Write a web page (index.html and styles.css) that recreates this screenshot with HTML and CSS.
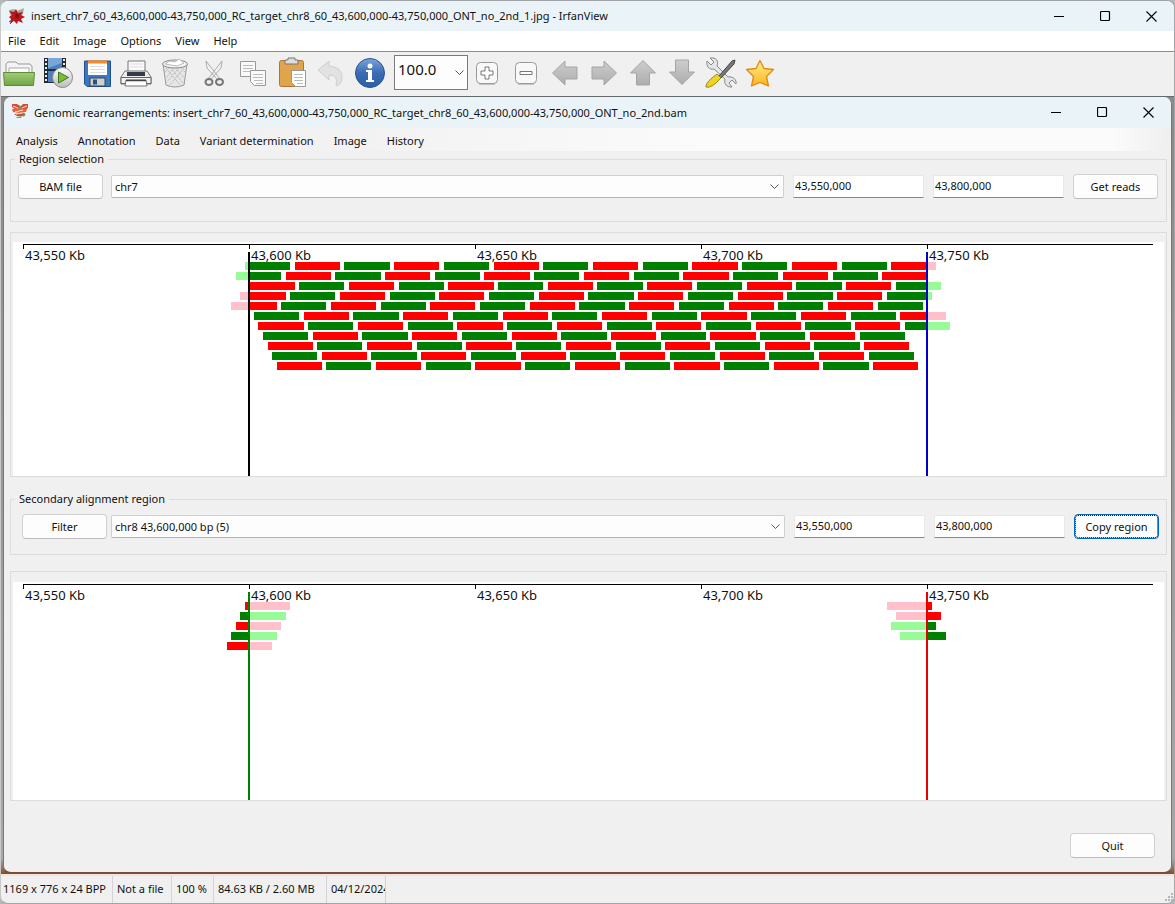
FILE: index.html
```html
<!DOCTYPE html>
<html lang="en">
<head>
<meta charset="utf-8">
<title>IrfanView</title>
<link rel="stylesheet" href="styles.css">
</head>
<body>
<div class="app">
  <header class="titlebar">
    <svg class="logo" width="18" height="18" viewBox="0 0 18 18"><path d="M1 3l5-1 3 2 7-3-1 6-3 3-4 2-5-2z" fill="#a9a9a0"/><path d="M1 4l5 1 2-3 2 4 5-1-2 3 4 2-4 2 2 4-5-2-1 3-3-3-4 2 1-4-2-2 3-2z" fill="#b8181c"/><path d="M8 6l3 2-1 4-3-2z" fill="#8c0b10"/><path d="M1 15l4-3M2 17l4-4" stroke="#44516b"/></svg>
    <h1>insert_chr7_60_43,600,000-43,750,000_RC_target_chr8_60_43,600,000-43,750,000_ONT_no_2nd_1.jpg - IrfanView</h1>
    <div class="winbtns">
      <button aria-label="Minimize"><svg width="11" height="11"><path d="M0 5.500h10" stroke="#000"/></svg></button>
      <button aria-label="Maximize"><svg width="11" height="11"><rect x=".5" y=".5" width="9" height="9" rx="1" fill="none" stroke="#000" stroke-width="1.200"/></svg></button>
      <button aria-label="Close"><svg width="11" height="11"><path d="M.5.5l10 10M10.500.5l-10 10" stroke="#000" stroke-width="1.100"/></svg></button>
    </div>
  </header>
  <nav class="menubar">
    <button>File</button><button>Edit</button><button>Image</button><button>Options</button><button>View</button><button>Help</button>
  </nav>
  <div class="toolbar">
    <button class="tool" aria-label="Open"><svg width="34" height="34" viewBox="0 0 34 34"><path d="M4 17V8l2-2h8l2 2h12l2 2v8z" fill="#f4f4f4" stroke="#999"/><path d="M7 17v-5h20v5" fill="#fff" stroke="#aaa"/><path d="M1.500 16.500h31l-1 13h-29z" fill="url(#green)" stroke="#5c8d35"/></svg></button>
    <button class="tool" aria-label="Slideshow"><svg width="34" height="34" viewBox="0 0 34 34"><path d="M3 2h22v25H3z" fill="#222b35"/><path d="M7 2h14v11H7zM7 15h14v11H7z" fill="#4a80bd"/><path d="M7 2h14v5L7 12z" fill="#79a8d8"/><path d="M5 3v23M23 3v23" stroke="#eee" stroke-width="2" stroke-dasharray="2 2"/><circle cx="21.500" cy="21.500" r="10" fill="url(#silver)" stroke="#888"/><path d="M17.500 16v11l10-5.500z" fill="#7dbb3d" stroke="#3d7718"/></svg></button>
    <button class="tool" aria-label="Save"><svg width="34" height="34" viewBox="0 0 34 34"><path d="M4.500 5h26v25.500H7l-2.500-2.500z" fill="#3b78c3" stroke="#234f88"/><path d="M8 5h19v14H8z" fill="#fff"/><path d="M8 4.500h19v3H8z" fill="#ff861c"/><path d="M10 10.500h15M10 13.500h15M10 16.500h15" stroke="#ddd"/><path d="M10 22h15v8H10z" fill="#cdd1d4" stroke="#345"/><path d="M13 23.500h4v5h-4z" fill="#33506f"/></svg></button>
    <button class="tool" aria-label="Print"><svg width="34" height="34" viewBox="0 0 34 34"><path d="M9 16V5h17v11" fill="#fafafa" stroke="#777"/><path d="M11 8h13M11 11h13" stroke="#ddd"/><path d="M6 15h22l4 6v7H2v-7z" fill="#eee" stroke="#777"/><path d="M8 16h18v4H8z" fill="#333c48"/><path d="M2 21.500h30v6H2z" fill="#f2f2f2" stroke="#666"/><path d="M7 24h20l1 6H6z" fill="#fff" stroke="#777"/><path d="M7 24.500h20" stroke="#444" stroke-width="1.500"/></svg></button>
    <button class="tool" aria-label="Delete"><svg width="34" height="34" viewBox="0 0 34 34"><path d="M5 8l3 21q9 4 18 0l3-21z" fill="#e6e6e6" stroke="#999"/><path d="M8 12l15 18M12 11l13 16M17 11l9 11M22 11l5 5M26 12L11 30M22 11L9 26M17 11L8 22M12 11l-5 5" stroke="#aaa" stroke-dasharray="1 1"/><ellipse cx="17" cy="8" rx="12.500" ry="4" fill="#f3f3f3" stroke="#888"/><path d="M7 8l5-3 5 1 4-3 5 4-7 3z" fill="#fff" stroke="#bbb"/></svg></button>
    <button class="tool" aria-label="Cut"><svg width="34" height="34" viewBox="0 0 34 34"><path d="M9 5l1 7 11 12 2-1zM25 5l-1 7-11 12-2-1z" fill="#f5f5f5" stroke="#aaa"/><g fill="none" stroke="#777" stroke-width="2"><ellipse cx="12" cy="26" rx="3.500" ry="3"/><ellipse cx="22.500" cy="26" rx="3.500" ry="3"/></g></svg></button>
    <button class="tool" aria-label="Copy"><svg width="34" height="34" viewBox="0 0 34 34"><g fill="#fafafa" stroke="#999"><path d="M4.500 5.500h15v15h-15z"/><path d="M14.500 14.500h15v15h-11l-4-4z"/></g><path d="M7 9.500h10M7 12.500h10M7 15.500h7M17 18.500h10M17 21.500h10M18 24.500h9M20 27.500h7" stroke="#bbb"/></svg></button>
    <button class="tool" aria-label="Paste"><svg width="34" height="34" viewBox="0 0 34 34"><rect x="4.500" y="4.500" width="24" height="26" rx="2" fill="#dfa44c" stroke="#a97835"/><path d="M10 8h13V4h-3V2h-7v2h-3z" fill="#ddd" stroke="#777"/><path d="M16.500 14.500h14v16h-10l-4-4z" fill="#fff" stroke="#999"/><path d="M19 18.500h9M19 21.500h9M19 24.500h9M22 27.500h6" stroke="#bbb"/></svg></button>
    <button class="tool" aria-label="Undo"><svg width="34" height="34" viewBox="0 0 34 34"><path d="M4 14L15 5v5q14 1 13 13-1 6-6 7 3-11-7-11v5z" fill="#e2e2e2" stroke="#cfcfcf"/></svg></button>
    <button class="tool" aria-label="Information"><svg width="34" height="34" viewBox="0 0 34 34"><circle cx="17" cy="17" r="14.500" fill="url(#blue)" stroke="#2a538f"/><circle cx="17" cy="10" r="2.500" fill="#fff"/><path d="M13 14h6v10h2v2h-8v-2h2v-8h-2z" fill="#fff"/></svg></button>
    <div class="combo zoom"><select aria-label="Zoom"><option>100.0</option></select><svg class="chev" width="9" height="6"><path d="M.5.5l4 4 4-4" fill="none" stroke="#555"/></svg></div>
    <button class="tool" aria-label="Zoom in"><svg width="34" height="34" viewBox="0 0 34 34"><rect x="6.500" y="6.500" width="21" height="21" rx="4" fill="#f8f8f8" stroke="#999"/><path d="M9 28h16" stroke="#999"/><path d="M15 11h4v4h4v4h-4v4h-4v-4h-4v-4h4z" fill="#fff" stroke="#777"/></svg></button>
    <button class="tool" aria-label="Zoom out"><svg width="34" height="34" viewBox="0 0 34 34"><rect x="6.500" y="6.500" width="21" height="21" rx="4" fill="#f8f8f8" stroke="#999"/><path d="M9 28h16" stroke="#999"/><path d="M11 15.500h12v3H11z" fill="#fff" stroke="#777"/></svg></button>
    <button class="tool" aria-label="Previous"><svg width="34" height="34" viewBox="0 0 34 34"><path d="M4.500 17L17 5v6h12v12H17v6z" fill="url(#gray)" stroke="#a4a4a4"/></svg></button>
    <button class="tool" aria-label="Next"><svg width="34" height="34" viewBox="0 0 34 34"><path d="M29.500 17L17 5v6H5v12h12v6z" fill="url(#gray)" stroke="#a4a4a4"/></svg></button>
    <button class="tool" aria-label="First"><svg width="34" height="34" viewBox="0 0 34 34"><path d="M17 4.500L29.500 17h-6v12h-13V17h-6z" fill="url(#gray)" stroke="#a4a4a4"/></svg></button>
    <button class="tool" aria-label="Last"><svg width="34" height="34" viewBox="0 0 34 34"><path d="M17 28.500L29.500 16h-6V4h-13v12h-6z" fill="url(#gray)" stroke="#a4a4a4"/></svg></button>
    <button class="tool" aria-label="Settings"><svg width="34" height="34" viewBox="0 0 34 34"><path d="M3 5l4 4 3-3-4-4c6-1 9 3 7 8l11 11c5-1 9 3 8 7l-4-4-3 3 3 4c-6 0-8-3-7-8L10 13c-5 1-8-3-7-8z" fill="#e6e6e6" stroke="#888"/><path d="M15 20L28 5l3-1-1 4-13 14z" fill="#777" stroke="#444"/><path d="M2 30q0-4 11-12l4 4Q7 33 2 31z" fill="#eed320" stroke="#a08a10"/></svg></button>
    <button class="tool" aria-label="Favourites"><svg width="34" height="34" viewBox="0 0 34 34"><path d="M17 4.500l4 8 9.500 1-7 7 2 9.500-8.500-3.500L8.500 30l2-9.500-7-7 9.500-1z" fill="url(#gold)" stroke="#e08a12" stroke-width="1.300" stroke-linejoin="round"/></svg></button>
    <svg class="defs" width="0" height="0"><defs>
      <linearGradient id="green" x2="0" y2="1"><stop stop-color="#a3cb78"/><stop offset="1" stop-color="#6fa645"/></linearGradient>
      <linearGradient id="silver" x2="0" y2="1"><stop stop-color="#fff"/><stop offset="1" stop-color="#bbb"/></linearGradient>
      <linearGradient id="blue" x2="0" y2="1"><stop stop-color="#7ba4da"/><stop offset=".5" stop-color="#3a6cb3"/><stop offset="1" stop-color="#2d5fa8"/></linearGradient>
      <linearGradient id="gray" x2="0" y2="1"><stop stop-color="#cdcdcd"/><stop offset="1" stop-color="#adadad"/></linearGradient>
      <linearGradient id="gold" x2="0" y2="1"><stop stop-color="#fff08c"/><stop offset="1" stop-color="#fdb21d"/></linearGradient>
    </defs></svg>
  </div>

  <div class="stage">
    <main class="window">
      <header class="titlebar inner">
        <svg class="logo" width="18" height="18" viewBox="0 0 18 18"><path d="M1 2h5l3 2 1 2-6 1-3-2zM10 4l2-2h5v4l-3 2-4-1z" fill="#dd4a33"/><path d="M1 7l7-1 8 1-1 3-7 1-6-1z" fill="#e8603f"/><path d="M3 12l11-1-2 3H6z" fill="#cf4b3c"/><path d="M5 15l6-1-1 2H6z" fill="#7fa860"/><path d="M2 4l5 2M11 6l5-2M4 10l8-2M5 12l6-1" stroke="#f4e6c4"/><path d="M8 4l2 2M12 14l2-2" stroke="#6b9a4a" stroke-width="2"/></svg>
        <h2>Genomic rearrangements: insert_chr7_60_43,600,000-43,750,000_RC_target_chr8_60_43,600,000-43,750,000_ONT_no_2nd.bam</h2>
        <div class="winbtns">
          <button aria-label="Minimize window"><svg width="11" height="11"><path d="M0 5.500h10" stroke="#000"/></svg></button>
          <button aria-label="Maximize window"><svg width="11" height="11"><rect x=".5" y=".5" width="9" height="9" rx="1" fill="none" stroke="#000" stroke-width="1.200"/></svg></button>
          <button aria-label="Close window"><svg width="11" height="11"><path d="M.5.5l10 10M10.500.5l-10 10" stroke="#000" stroke-width="1.100"/></svg></button>
        </div>
      </header>
      <nav class="menubar inner">
        <button>Analysis</button><button>Annotation</button><button>Data</button><button>Variant determination</button><button>Image</button><button>History</button>
      </nav>
      <div class="content">
        <fieldset class="group primary">
          <legend>Region selection</legend>
          <div class="fields">
            <button class="btn">BAM file</button>
            <div class="combo"><select aria-label="Chromosome"><option>chr7</option></select><svg class="chev" width="9" height="6"><path d="M.5.5l4 4 4-4" fill="none" stroke="#555"/></svg></div>
            <input class="coord" aria-label="Region start" value="43,550,000">
            <input class="coord" aria-label="Region end" value="43,800,000">
            <button class="btn">Get reads</button>
          </div>
        </fieldset>
        <section class="panel tall" aria-label="Primary alignments">
          <div class="canvas">
            <div class="axis"><span>43,550 Kb</span><span>43,600 Kb</span><span>43,650 Kb</span><span>43,700 Kb</span><span>43,750 Kb</span></div>
            <svg class="reads" id="primary" preserveAspectRatio="none"></svg>
          </div>
        </section>
        <fieldset class="group secondary">
          <legend>Secondary alignment region</legend>
          <div class="fields">
            <button class="btn">Filter</button>
            <div class="combo"><select aria-label="Secondary region"><option>chr8 43,600,000 bp (5)</option></select><svg class="chev" width="9" height="6"><path d="M.5.5l4 4 4-4" fill="none" stroke="#555"/></svg></div>
            <input class="coord" aria-label="Secondary start" value="43,550,000">
            <input class="coord" aria-label="Secondary end" value="43,800,000">
            <button class="btn focused">Copy region</button>
          </div>
        </fieldset>
        <section class="panel short" aria-label="Secondary alignments">
          <div class="canvas">
            <div class="axis"><span>43,550 Kb</span><span>43,600 Kb</span><span>43,650 Kb</span><span>43,700 Kb</span><span>43,750 Kb</span></div>
            <svg class="reads" id="secondary" preserveAspectRatio="none"></svg>
          </div>
        </section>
        <div class="actions"><button class="btn">Quit</button></div>
      </div>
    </main>
  </div>

  <footer class="status">
    <span class="size">1169 x 776 x 24 BPP</span><span class="index">Not a file</span><span class="scale">100 %</span><span class="memory">84.63 KB / 2.60 MB</span><span class="date">04/12/2024</span>
    <svg class="grip" width="9" height="9"><path d="M7 0h2v2H7zM4 3h2v2H4zM7 3h2v2H7zM1 6h2v2H1zM4 6h2v2H4zM7 6h2v2H7z" fill="#b5b5b5"/></svg>
  </footer>
</div>
<script src="reads.js"></script>
</body>
</html>
```
FILE: styles.css
```css
* { box-sizing: border-box; }
body { margin: 0; background: #b4b6b8; font: 11px/16px "Noto Sans", "Open Sans", sans-serif; color: #111; }
button, input, select { font: inherit; color: inherit; margin: 0; }
button { border: 0; background: none; padding: 0; }
h1, h2 { margin: 0; font: inherit; white-space: nowrap; }
svg { display: block; }

.app { min-height: 100vh; display: flex; flex-direction: column; background: #f0f0f0; border: 1px solid #a2a5a8; border-left-color: #c8c8c8; border-radius: 8px; overflow: hidden; }
.titlebar { height: 30px; flex: none; display: flex; align-items: center; padding-left: 7px; gap: 5px; background: #eaf4f8; }
.titlebar h1, .titlebar h2 { flex: 1; font-size: 11px; }
.winbtns { display: flex; }
.winbtns button { width: 46px; height: 28px; display: grid; place-items: center; }
.menubar { height: 20px; flex: none; display: flex; align-items: center; gap: 14px; padding-left: 7px; background: #fff; }
.toolbar { height: 45px; flex: none; display: flex; align-items: center; border-top: 1px solid #8c8c8c; padding-bottom: 3px; }
.tool { width: 39px; height: 40px; display: grid; place-items: center start; padding-left: 1px; }
.defs { position: absolute; }

.combo { position: relative; flex: 1; }
.combo select { width: 100%; height: 23px; appearance: none; border: 1px solid #d0d0d0; border-bottom-color: #b4b4b4; border-radius: 2px; background: #fdfdfd; padding: 0 3px; }
.chev { position: absolute; right: 5px; top: 9px; pointer-events: none; }
.combo.zoom { flex: none; width: 74px; margin: 0 1px 0 3px; }
.zoom select { height: 35px; border-color: #7a7a7a; border-radius: 0; font-size: 15px; line-height: 20px; padding: 0 3px 8px; }
.zoom .chev { right: 4px; top: 15px; }

.stage { flex: 1; display: flex; padding: 0 2px 0 2px; background: linear-gradient(#8a8a8a, #a8a8a8 98%, #8b4a28); border-top: 1px solid #66696c; }
.window { flex: 1; min-width: 0; display: flex; flex-direction: column; background: #f0f0f0; border: 1px solid #777; border-top: 0; border-bottom: 2px solid #75503e; border-radius: 8px; overflow: hidden; }
.titlebar.inner { height: 31px; }
.inner .logo { margin-bottom: 3px; }
.menubar.inner { height: 23px; padding: 2px 0 0 12px; gap: 20px; background: linear-gradient(90deg, #f0f0f0, #f2f2f2 30%, #fbfbfb 60%, #fbfbfb 95%, #efefef); }
.content { flex: 1; display: flex; flex-direction: column; padding: 0 4px 0 6px; }

.group { margin: 0; min-width: 0; border: 1px solid #dcdcdc; }
.group legend { padding: 0 4px; line-height: 16px; }
.primary { height: 71px; padding: 7px 8px 0 7px; }
.secondary { height: 64px; padding: 7px 7px 0 11px; }
.primary legend { margin-left: -3px; }
.secondary legend { margin-left: -7px; }
.fields { display: flex; align-items: center; gap: 9px; }
.primary .btn:first-child { margin-right: -1px; }
.secondary .btn:first-child { margin-right: -5px; }
.btn { width: 85px; height: 25px; flex: none; background: #fdfdfd; border: 1px solid #d0d0d0; border-bottom-color: #bcbcbc; border-radius: 4px; }
.btn.focused { border: 1px solid #0067c0; outline: 1px dotted #111; outline-offset: -2px; }
.coord { width: 131px; height: 23px; flex: none; border: 1px solid #e8e8e8; border-bottom-color: #868686; background: #fff; padding: 0 1px 2px; }

.panel { border: 1px solid #dcdcdc; display: flex; padding: 9px 2px 0; }
.tall { height: 245px; margin: 10px 0 14px; }
.short { height: 230px; margin-top: 16px; padding-top: 10px; }
.canvas { flex: 1; min-width: 0; background: #fff; padding: 2px 11px 0 10px; display: flex; flex-direction: column; }
.axis { display: grid; grid-template-columns: repeat(5, 1fr); border-top: 1px solid #000; height: 8px; font-size: 13px; line-height: 14px; }
.axis span { height: 4px; border-left: 1px solid #000; padding: 3px 0 0 1px; white-space: nowrap; }
.reads { width: 100%; flex: 1; min-height: 0; }
.actions { display: flex; justify-content: flex-end; padding: 32px 12px 0 0; }

.status { height: 29px; flex: none; display: flex; align-items: stretch; border-top: 2px solid #f6e3d4; position: relative; white-space: nowrap; line-height: 26px; }
.status span { border-right: 1px solid #d4d4d4; padding-left: 4px; overflow: hidden; }
.status .size { width: 112px; padding-left: 2px; }
.index { width: 59px; }
.scale { width: 42px; }
.memory { width: 113px; }
.date { width: 59px; }
.grip { position: absolute; right: 1px; bottom: 1px; }
```
FILE: reads.js
```javascript
const COLORS = { G: ["#008000", "#98fb98"], R: ["#ff0000", "#ffc0cb"] };
const SPAN = 250, STEP = 11, LENGTH = 10, LEFT = 50, RIGHT = 200;

function rect(svg, x, y, w, h, fill) {
  if (w <= 0) return;
  const r = document.createElementNS("http://www.w3.org/2000/svg", "rect");
  r.setAttribute("x", x);
  r.setAttribute("y", y);
  r.setAttribute("width", w);
  r.setAttribute("height", h);
  r.setAttribute("fill", fill);
  r.setAttribute("shape-rendering", "crispEdges");
  svg.append(r);
}

/* Splits a read at the two breakpoints; shades[0..2] colour left, middle, right. */
function read(svg, start, row, shades) {
  const end = start + LENGTH, y = 10 + row * 10;
  const nudge = 0.1; /* biases the rounding of bar edges towards the next pixel */
  rect(svg, start + nudge, y, Math.min(end, LEFT) - start, 8, shades[0]);
  const a = Math.max(start, LEFT);
  rect(svg, a + nudge, y, Math.min(end, RIGHT) - a, 8, shades[1]);
  const b = Math.max(start, RIGHT);
  rect(svg, b + nudge, y, end - b, 8, shades[2]);
}

function draw(id, fill, left, right) {
  const svg = document.getElementById(id);
  const height = svg.getBoundingClientRect().height;
  svg.setAttribute("viewBox", `0 0 ${SPAN} ${height}`);
  fill(svg);
  const px = SPAN / svg.getBoundingClientRect().width;
  rect(svg, LEFT - px, 0, 2 * px, height, left);
  rect(svg, RIGHT - px, 0, 2 * px, height, right);
}

draw("primary", svg => {
  [[49, "G", 14], [47, "G", 14], [50, "R", 14], [48, "R", 14], [46, "R", 14], [51, "G", 14],
   [52, "R", 14], [53, "G", 13], [54, "R", 13], [55, "G", 13], [56, "R", 13]]
  .forEach(([start, first, count], row) => {
    for (let i = 0; i < count; i++) {
      const c = COLORS[i % 2 ? (first === "G" ? "R" : "G") : first];
      read(svg, start + i * STEP, row, [c[1], c[0], c[1]]);
    }
  });
}, "#000", "#0000c8");

draw("secondary", svg => {
  [[49, "R", 0], [48, "G", 1], [47, "R", 2], [46, "G", 3], [45, "R", 4],
   [191, "R", 0], [193, "R", 1], [192, "G", 2], [194, "G", 3]]
  .forEach(([start, k, row]) => {
    const [dark, light] = COLORS[k];
    read(svg, start, row, [dark, light, dark]);
  });
}, "#008000", "#e60000");
```
